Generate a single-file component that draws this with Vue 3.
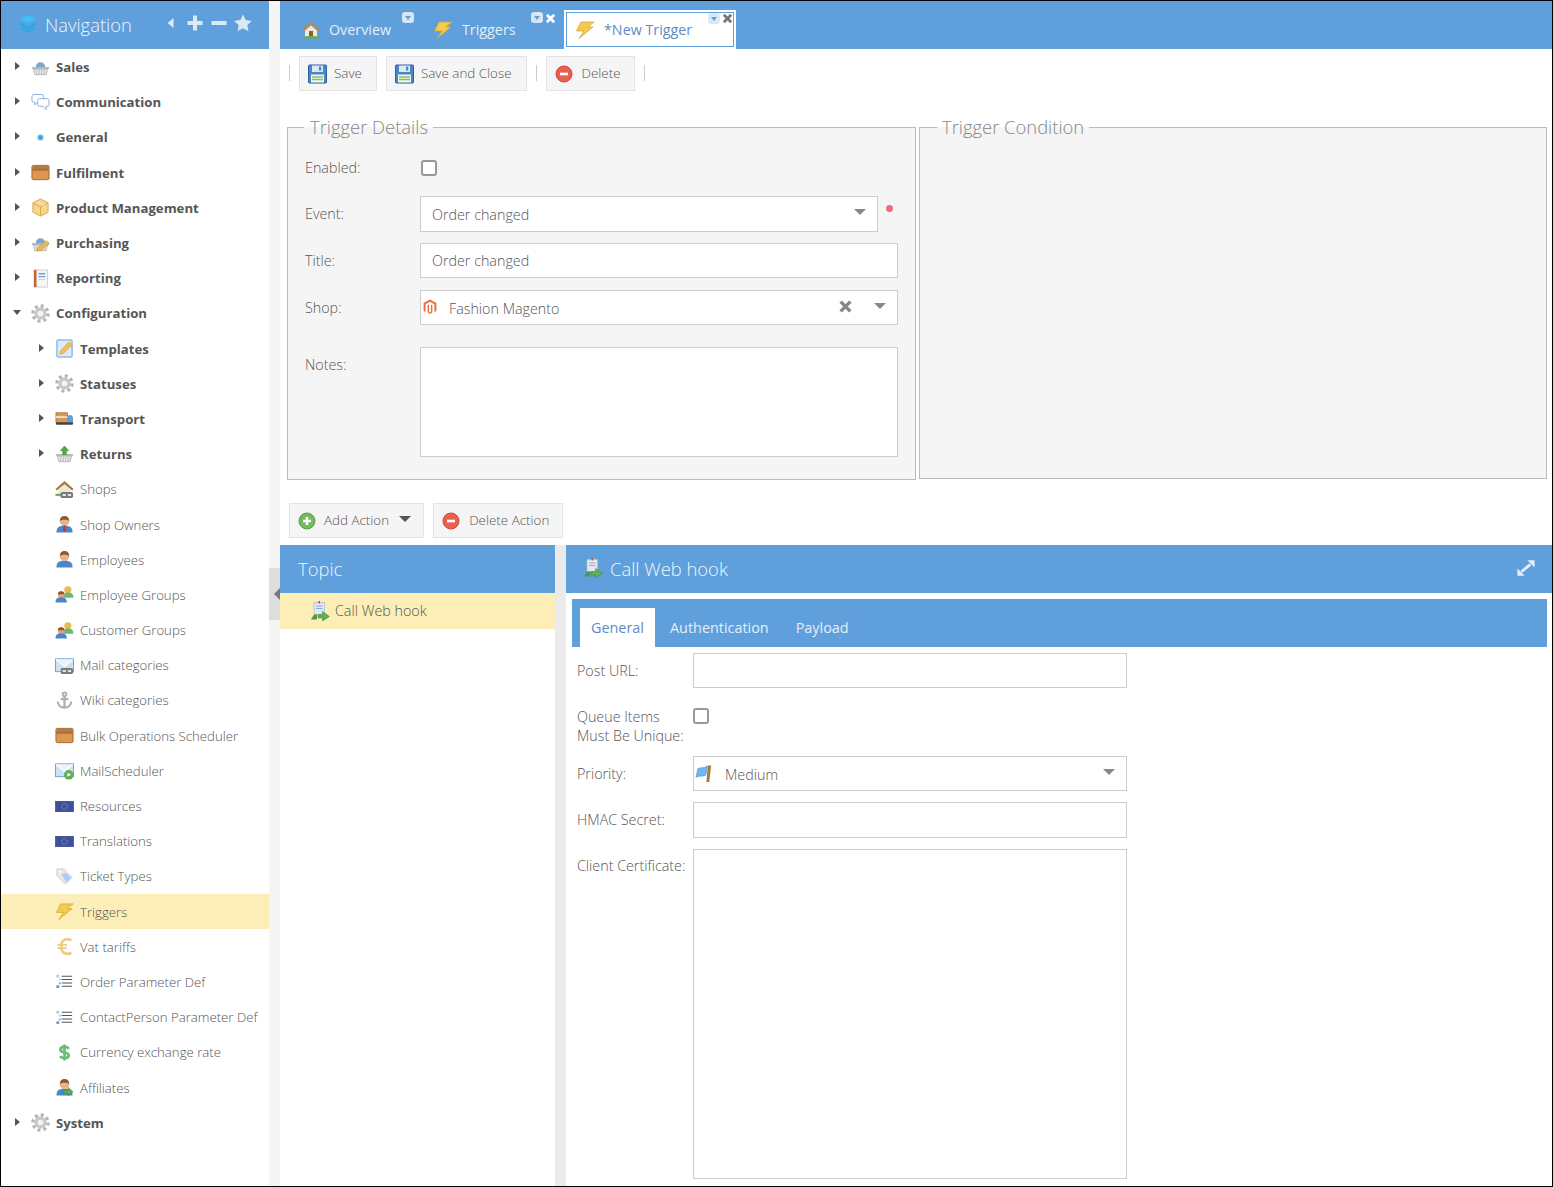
<template>
  <div class="page">
    <aside class="sidebar">
      <div class="nav_head">
        <svg class="ic cube" viewBox="0 0 20 20" v-html="icons.cube"></svg>
        <span class="nav_title">Navigation</span>
        <div class="nav_tools">
          <svg viewBox="0 0 20 20"><path d="M12.500 5v10l-6-5z" fill="#dbe9f7"/></svg>
          <svg viewBox="0 0 20 20"><path d="M8 2.500h4v5.500h5.500v4H12v5.500H8V12H2.500V8H8z" fill="#dbe9f7"/></svg>
          <svg viewBox="0 0 20 20"><path d="M2.500 8h15v4h-15z" fill="#dbe9f7"/></svg>
          <svg viewBox="0 0 20 20"><path d="M10 1.500l2.700 5.600 6.100.8-4.500 4.200 1.200 6.100L10 15.200l-5.500 3 1.200-6.100-4.500-4.200 6.100-.8z" fill="#dbe9f7"/></svg>
        </div>
      </div>
      <ul class="tree">
        <li v-for="item in tree" :key="item.label" class="tree_row"
            :class="{ level1: item.level === 1, active: item.active, bold: item.bold }">
          <span class="caret_slot">
            <i v-if="item.caret === 'right'" class="caret_right"></i>
            <i v-if="item.caret === 'down'" class="caret_down"></i>
          </span>
          <svg class="ic" viewBox="0 0 20 20" v-html="icons[item.icon]"></svg>
          <span class="tree_label">{{ item.label }}</span>
        </li>
      </ul>
    </aside>

    <div class="gutter">
      <div class="collapse_handle"><i></i></div>
    </div>

    <main class="main">
      <div class="tabs">
        <div class="tab tab_overview">
          <svg class="ic" viewBox="0 0 20 20" v-html="icons.home"></svg>
          <span>Overview</span>
          <span class="tab_menu"></span>
        </div>
        <div class="tab tab_triggers">
          <svg class="ic" viewBox="0 0 20 20" v-html="icons.bolt"></svg>
          <span>Triggers</span>
          <span class="tab_menu"></span>
          <svg class="tab_close" viewBox="0 0 12 12"><path d="M2 2l8 8M10 2l-8 8" stroke="currentColor" stroke-width="3"/></svg>
        </div>
        <div class="tab tab_active">
          <svg class="ic" viewBox="0 0 20 20" v-html="icons.bolt"></svg>
          <span>*New Trigger</span>
          <span class="tab_menu"></span>
          <svg class="tab_close" viewBox="0 0 12 12"><path d="M2 2l8 8M10 2l-8 8" stroke="currentColor" stroke-width="3"/></svg>
        </div>
      </div>

      <div class="toolbar">
        <span class="sep"></span>
        <button class="btn">
          <svg class="ic" viewBox="0 0 20 20" v-html="icons.save"></svg><span class="btn_text">Save</span>
        </button>
        <button class="btn">
          <svg class="ic" viewBox="0 0 20 20" v-html="icons.save"></svg><span class="btn_text">Save and Close</span>
        </button>
        <span class="sep"></span>
        <button class="btn btn_del">
          <svg class="ic" viewBox="0 0 20 20" v-html="icons.remove"></svg><span class="btn_text">Delete</span>
        </button>
        <span class="sep"></span>
      </div>

      <div class="fieldsets">
        <fieldset class="group group_left">
          <legend>Trigger Details</legend>
          <div class="row row_enabled">
            <label>Enabled:</label>
            <input type="checkbox" class="check">
          </div>
          <div class="row row_event">
            <label>Event:</label>
            <div class="combo combo_event">
              <span class="combo_text">Order changed</span>
              <i class="combo_caret"></i>
            </div>
            <span class="required"></span>
          </div>
          <div class="row row_title">
            <label>Title:</label>
            <input type="text" class="text_input" value="Order changed">
          </div>
          <div class="row row_shop">
            <label>Shop:</label>
            <div class="combo">
              <svg class="ic ic_magento" viewBox="0 0 20 20" v-html="icons.magento"></svg>
              <span class="combo_text combo_text_low">Fashion Magento</span>
              <svg class="combo_clear" viewBox="0 0 12 12"><path d="M1.500 1.500l9 9M10.500 1.500l-9 9" stroke="#888" stroke-width="3.200"/></svg>
              <i class="combo_caret"></i>
            </div>
          </div>
          <div class="row row_notes">
            <label>Notes:</label>
            <textarea class="text_area notes_area"></textarea>
          </div>
        </fieldset>
        <fieldset class="group group_right">
          <legend>Trigger Condition</legend>
        </fieldset>
      </div>

      <div class="action_bar">
        <button class="btn btn_add">
          <svg class="ic" viewBox="0 0 20 20" v-html="icons.add"></svg><span class="btn_text">Add Action</span><i class="btn_caret"></i>
        </button>
        <button class="btn btn_del">
          <svg class="ic" viewBox="0 0 20 20" v-html="icons.remove"></svg><span class="btn_text">Delete Action</span>
        </button>
      </div>

      <div class="panels">
        <section class="topic_panel">
          <h2 class="panel_head">Topic</h2>
          <div class="topic_row">
            <svg class="ic" viewBox="0 0 20 20" v-html="icons.hook"></svg>
            <span class="topic_text">Call Web hook</span>
          </div>
        </section>
        <section class="detail_panel">
          <h2 class="panel_head detail_head">
            <svg class="ic" viewBox="0 0 20 20" v-html="icons.hook"></svg>
            <span>Call Web hook</span>
            <svg class="expand" viewBox="0 0 20 20">
              <path d="M11.500 1.500H19.500v8z" fill="#e4eff9"/>
              <path d="M0.500 10.500v8h8z" fill="#e4eff9"/>
              <path d="M15 6l-10 8" stroke="#e4eff9" stroke-width="3"/>
            </svg>
          </h2>
          <div class="sub_tabs">
            <span class="sub_tab sub_active">General</span>
            <span class="sub_tab sub_auth">Authentication</span>
            <span class="sub_tab sub_payload">Payload</span>
          </div>
          <div class="detail_form">
            <div class="drow">
              <label>Post URL:</label>
              <input type="text" class="text_input">
            </div>
            <div class="drow drow_queue">
              <label>Queue Items<br>Must Be Unique:</label>
              <input type="checkbox" class="check">
            </div>
            <div class="drow drow_gap">
              <label>Priority:</label>
              <div class="combo">
                <svg class="ic ic_flag" viewBox="0 0 20 20" v-html="icons.flag"></svg>
                <span class="combo_text combo_text_low">Medium</span>
                <i class="combo_caret"></i>
              </div>
            </div>
            <div class="drow drow_gap drow_hmac">
              <label>HMAC Secret:</label>
              <input type="text" class="text_input">
            </div>
            <div class="drow drow_gap drow_cert">
              <label>Client Certificate:</label>
              <textarea class="text_area cert_area"></textarea>
            </div>
          </div>
        </section>
      </div>
    </main>
  </div>
</template>

<script setup>
const basket = '<path d="M1 9.500h18v2H1z" fill="#b9b9b9"/><path d="M2.500 11.500h15l-1.500 6H4z" fill="#e6e6e6" stroke="#a9a9a9" stroke-width=".8"/><path d="M6 12v5M8.700 12v5M11.300 12v5M14 12v5" stroke="#b5b5b5" stroke-width=".8"/>'
const chain = '<rect x="6" y="12.500" width="13" height="6.500" rx="2" fill="#777"/><rect x="8" y="14.700" width="3.500" height="2.200" fill="#e4e4e4"/><rect x="13.500" y="14.700" width="3.500" height="2.200" fill="#e4e4e4"/>'
const person = '<path d="M1.500 18.500c0-5.500 3-7.500 8.500-7.500s8.500 2 8.500 7.500z" fill="#4a86c8"/><circle cx="10" cy="6.500" r="5" fill="#e9b488"/><path d="M5 6.500C5 3 7 1 10 1s5 2 5 5.500C13.500 4.500 6.500 4.500 5 6.500z" fill="#8a5a33"/>'
const people = '<circle cx="13.500" cy="5" r="3.800" fill="#eab95a"/><path d="M8.500 13.500c0-3.500 2-5.500 5.500-5.500s5.500 2 5.500 5.500z" fill="#6fb76a"/><circle cx="6.500" cy="10" r="3.500" fill="#e3a478"/><path d="M3 9.800c0-2.200 1.500-3.300 3.500-3.300s3.500 1.100 3.500 3.300z" fill="#8a5a33"/><path d="M.5 18.500c0-3.500 2-5.500 6-5.500s6 2 6 5.500z" fill="#4a86c8"/>'
const envelope = '<rect x="0.500" y="3" width="19" height="13.500" fill="#cfe2f5" stroke="#6f9fd0"/><path d="M1 3.500L10 11l9-7.500" fill="#e9f2fb" stroke="#fff" stroke-width="1.200"/>'
const flagEu = '<rect x="0.500" y="4.500" width="19" height="11" fill="#3c4fa0" stroke="#2f3b7d" stroke-width=".6"/><circle cx="10" cy="10" r="3" fill="none" stroke="#d8c65a" stroke-width=".9" stroke-dasharray="1 1.350"/>'
const listLines = '<path d="M7 4.500h11M7 8h11M7 11.500h11M7 15h11" stroke="#555" stroke-width="1.100"/><rect x="1.500" y="3" width="2.800" height="2.800" fill="#a8cdf2"/><rect x="4" y="7" width="2" height="2" fill="#a8cdf2"/><rect x="4" y="11" width="2" height="2" fill="#7aa8e0"/><rect x="1.500" y="14" width="2.800" height="2.800" fill="#5f8fdc"/>'
const gear = '<circle cx="10" cy="10" r="8" fill="none" stroke="#b3b3b3" stroke-width="3.400" stroke-dasharray="3.100 3.180"/><circle cx="10" cy="10" r="6.500" fill="#c8c8c8"/><circle cx="10" cy="10" r="3" fill="#f4f4f4"/>'
const crate = '<rect x="1" y="2.500" width="18" height="15" rx="1.500" fill="#e0964f" stroke="#99683a"/><rect x="2" y="3.300" width="16" height="3.500" fill="#b57a43"/><path d="M1.500 7.300h17" stroke="#8f5f33" stroke-width="1.200"/>'

const icons = {
  cube: '<path d="M10 1l8 4-8 4.500L2 5z" fill="#3fc0f5"/><path d="M2 8l8 4.500L18 8v3l-8 4.500L2 11z" fill="#2aa9e8"/><path d="M4 13l6 3.500 6-3.500 2 1.500-8 4.500-8-4.500z" fill="#2aa9e8"/>',
  basket: '<path d="M5 9.500a5 5 0 0 1 10 0z" fill="#7ba7cf"/>' + basket,
  chat: '<path d="M3 1.500h8a2 2 0 0 1 2 2v4a2 2 0 0 1-2 2H7l-3 3v-3H3a2 2 0 0 1-2-2v-4a2 2 0 0 1 2-2z" fill="#fff" stroke="#7fb0e0"/><path d="M9 6h8a2 2 0 0 1 2 2v4a2 2 0 0 1-2 2h-1v3.500L12.500 14H9a2 2 0 0 1-2-2V8a2 2 0 0 1 2-2z" fill="#fff" stroke="#7fb0e0"/>',
  dot: '<circle cx="10" cy="10" r="3.200" fill="#62b8ee"/><circle cx="10" cy="10" r="1.500" fill="#3f9be0"/>',
  crate,
  pack: '<path d="M10 1l8 4v10l-8 4-8-4V5z" fill="#f6d58d" stroke="#dca84a"/><path d="M2.500 5.500L10 9.500l7.500-4M10 9.500V18.500" stroke="#dca84a" fill="none"/><path d="M6 3.500L14 7.500v3" stroke="#fbecc4" fill="none"/>',
  purchase: '<path d="M5 9.500a5 5 0 0 1 10 0z" fill="#7ba7cf"/>' + basket + '<path d="M6 18l1-3 9-8 3 2.500-9 8z" fill="#eeb94f" stroke="#b9862c" stroke-width=".6"/>',
  report: '<rect x="3.500" y="1" width="14" height="18" fill="#f5f5f5" stroke="#cfcfcf"/><rect x="3" y="1" width="2.800" height="18" fill="#c2673a"/><path d="M8 5h7M8 8h7" stroke="#6fa0e0" stroke-width="1.400"/><path d="M8 11h7" stroke="#ccc"/>',
  gear,
  template: '<rect x="2" y="1" width="16" height="18" rx="1" fill="#dcebf9" stroke="#5d9be0"/><path d="M5 16l1-4 9-9 3 3-9 9z" fill="#efc25f" stroke="#c2932f" stroke-width=".6"/>',
  truck: '<rect x="1" y="4" width="12" height="10" fill="#d99a50" stroke="#8c6030" stroke-width=".7"/><path d="M1 7.500h12v2H1z" fill="#f1e3cb"/><path d="M13.500 6.500H18l1 3v5h-5.500z" fill="#5e9fdc"/><rect x="1" y="14" width="18" height="2.500" rx="1" fill="#444"/>',
  returns: basket + '<path d="M10 1l4.500 5H12v4H8V6H5.500z" fill="#55a83f" stroke="#3d8430" stroke-width=".5"/>',
  shop: '<path d="M10 1L.5 9.500 2 11l8-6.500L18 11l1.500-1.500z" fill="#a97941"/><path d="M3.500 10L10 5l6.500 5v8h-13z" fill="#efe7d5"/><rect x=".5" y="14.500" width="7" height="2.200" fill="#69a84f"/>' + chain,
  owner: person + '<path d="M9 11h2l.6 5-1.600 1.500L8.400 16z" fill="#c0392b"/>',
  person,
  people,
  mail_link: envelope + chain,
  anchor: '<circle cx="10" cy="3.500" r="2" fill="none" stroke="#b0b0b0" stroke-width="2"/><path d="M10 5.500v12M6 8.500h8M3 11c0 4 3 6.500 7 6.500s7-2.500 7-6.500" fill="none" stroke="#b0b0b0" stroke-width="2.400"/>',
  mail_play: envelope + '<circle cx="14.500" cy="14.500" r="5" fill="#62ae55"/><path d="M13 12.300l4 2.200-4 2.200z" fill="#fff"/>',
  eu: flagEu,
  tag: '<path d="M2 2h7l9 9-7 7-9-9z" fill="#e8e8e8" stroke="#ccc"/><path d="M7 8l4-2 6 5.500-5 5z" fill="#a9cdf2"/><circle cx="5" cy="5" r="1.300" fill="#fff"/>',
  bolt: '<path d="M6 2h13l-6 5h5L4 18.500l5-7.500H1.500z" fill="#f2cb4f" stroke="#d8a53a" stroke-width=".8"/>',
  euro: '<path d="M17 3.800C15.800 2.600 14.500 2.200 13 2.200 9 2.200 6.500 5.500 6.500 10s2.500 7.800 6.500 7.800c1.500 0 2.800-.4 4-1.600" fill="none" stroke="#eccb85" stroke-width="3"/><path d="M2.500 8.300h10M2.500 11.700h10" stroke="#eccb85" stroke-width="2"/>',
  list: listLines,
  dollar: '<path d="M14.500 6c-1-1.500-2.700-2-4.500-2-2.500 0-4.300 1.200-4.300 3s1.800 2.500 4.300 3 4.500 1.200 4.500 3-2 3-4.500 3c-2 0-3.700-.6-4.700-2M10 1.500v17" fill="none" stroke="#6cbb72" stroke-width="2.800"/>',
  affiliate: person + '<path d="M9 13h5v-3l5 4.500-5 4.500v-3H9z" fill="#5fae52" stroke="#3d8430" stroke-width=".5"/>',
  home: '<path d="M10 2L1 10l1.500 1.500L10 5l7.500 6.500L19 10z" fill="#b98a4d"/><path d="M4 10.500L10 5.500l6 5V17H4z" fill="#f0e9da"/><rect x="8" y="11" width="4" height="6" fill="#8a6236"/><path d="M1 17c3-1.500 15-1.500 18 0l-1 1.500H2z" fill="#6fa84f"/>',
  save: '<rect x=".5" y="1" width="18" height="18" rx="1" fill="#4d86c6" stroke="#2f5f9c"/><rect x="4" y="1.500" width="11" height="6.500" fill="#dce8f5"/><rect x="11" y="2.500" width="2.200" height="4" fill="#4d86c6"/><rect x="3" y="10.500" width="13" height="8" fill="#f2f6ea"/><path d="M4 13h11M4 15.500h11" stroke="#8cbf6a" stroke-width="1.500"/>',
  remove: '<circle cx="9" cy="10" r="8" fill="#e8604f" stroke="#d2483b"/><rect x="5" y="8.700" width="8" height="2.600" fill="#fff"/>',
  add: '<circle cx="9" cy="10" r="8" fill="#76b95f" stroke="#5c9d49"/><path d="M7.700 6h2.600v2.700H13v2.600h-2.700V14H7.700v-2.700H5V8.700h2.700z" fill="#fff"/>',
  hook: '<path d="M4 1.500h10.500v12H4z" fill="#e4e8ec" stroke="#b5bdc5" stroke-width=".8"/><path d="M6 5h6.500M6 7.500h6.500" stroke="#7fb0e0"/><rect x="8.500" y="0" width="1.500" height="2.500" fill="#b55"/><path d="M8 13.500h4.500V10.500l7 5-7 4.500v-3H8z" fill="#62ae55" stroke="#3d8430" stroke-width=".5"/><path d="M1 18.500l3-5h3v5z" fill="#4f9a45"/>',
  magento: '<path d="M10 .5L18 5v10l-2.500 1.400V6.500L10 3.400 4.500 6.500v9.900L2 15V5z" fill="#ee6d3a"/><path d="M7 7.800l1.800-1v9.400l1.200.7 1.200-.7V6.800l1.800 1V17l-3 1.800L7 17z" fill="#ee6d3a"/>',
  flag: '<path d="M3 5c3-2 6 0 10-3l-1.500 9.500c-3 2-7 .5-10.500 2.500z" fill="#6fb8ee" stroke="#3f8fd0" stroke-width=".6"/><path d="M13.500 1.500h3.500L15 19h-3z" fill="#a9783f"/>',
}

const tree = [
  { label: 'Sales', icon: 'basket', bold: true, caret: 'right' },
  { label: 'Communication', icon: 'chat', bold: true, caret: 'right' },
  { label: 'General', icon: 'dot', bold: true, caret: 'right' },
  { label: 'Fulfilment', icon: 'crate', bold: true, caret: 'right' },
  { label: 'Product Management', icon: 'pack', bold: true, caret: 'right' },
  { label: 'Purchasing', icon: 'purchase', bold: true, caret: 'right' },
  { label: 'Reporting', icon: 'report', bold: true, caret: 'right' },
  { label: 'Configuration', icon: 'gear', bold: true, caret: 'down' },
  { label: 'Templates', icon: 'template', bold: true, caret: 'right', level: 1 },
  { label: 'Statuses', icon: 'gear', bold: true, caret: 'right', level: 1 },
  { label: 'Transport', icon: 'truck', bold: true, caret: 'right', level: 1 },
  { label: 'Returns', icon: 'returns', bold: true, caret: 'right', level: 1 },
  { label: 'Shops', icon: 'shop', level: 1 },
  { label: 'Shop Owners', icon: 'owner', level: 1 },
  { label: 'Employees', icon: 'person', level: 1 },
  { label: 'Employee Groups', icon: 'people', level: 1 },
  { label: 'Customer Groups', icon: 'people', level: 1 },
  { label: 'Mail categories', icon: 'mail_link', level: 1 },
  { label: 'Wiki categories', icon: 'anchor', level: 1 },
  { label: 'Bulk Operations Scheduler', icon: 'crate', level: 1 },
  { label: 'MailScheduler', icon: 'mail_play', level: 1 },
  { label: 'Resources', icon: 'eu', level: 1 },
  { label: 'Translations', icon: 'eu', level: 1 },
  { label: 'Ticket Types', icon: 'tag', level: 1 },
  { label: 'Triggers', icon: 'bolt', level: 1, active: true },
  { label: 'Vat tariffs', icon: 'euro', level: 1 },
  { label: 'Order Parameter Def', icon: 'list', level: 1 },
  { label: 'ContactPerson Parameter Def', icon: 'list', level: 1 },
  { label: 'Currency exchange rate', icon: 'dollar', level: 1 },
  { label: 'Affiliates', icon: 'affiliate', level: 1 },
  { label: 'System', icon: 'gear', bold: true, caret: 'right' },
]
</script>

<style>
html, body {
  margin: 0;
  overflow: hidden;
}
</style>

<style scoped>
.page {
  box-sizing: border-box;
  width: 1553px;
  height: 1187px;
  border: 1px solid #000;
  display: flex;
  background: #fff;
  font-family: "Open Sans", sans-serif;
  font-size: 14.3px;
  color: #555;
  overflow: hidden;
}

.ic {
  width: 20px;
  height: 20px;
  flex: none;
}

/* navigation */
.sidebar {
  width: 268px;
  flex: none;
  background: #fff;
}

.nav_head {
  box-sizing: border-box;
  height: 48px;
  background: #5e9fdc;
  display: flex;
  align-items: center;
  padding: 0 0 2px 17px;
  color: #f0f6fc;
  font-size: 18.4px;
  font-weight: 300;
}

.nav_title {
  margin-left: 7px;
}

.nav_tools {
  display: flex;
  margin-left: 29px;
  margin-top: -2px;
  gap: 4px;
}

.nav_tools svg {
  width: 20px;
  height: 20px;
}

.tree {
  list-style: none;
  margin: 0;
  padding: 0.5px 0 0;
}

.tree_row {
  height: 35.2px;
  display: flex;
  align-items: center;
  padding-left: 10px;
  font-size: 13.2px;
  font-weight: 300;
}

.tree_row .ic {
  width: 19px;
  height: 19px;
}

.tree_row.bold {
  font-weight: 700;
}

.tree_row.level1 {
  padding-left: 34px;
}

.tree_row.active {
  background: #fdeeb8;
}

.caret_slot {
  width: 12px;
  margin-right: 8px;
  height: 12px;
  display: flex;
  align-items: center;
  justify-content: center;
  margin-top: -2px;
}

.caret_right {
  border-left: 5px solid #555;
  border-top: 4.5px solid transparent;
  border-bottom: 4.5px solid transparent;
}

.caret_down {
  border-top: 5px solid #555;
  border-left: 4.5px solid transparent;
  border-right: 4.5px solid transparent;
}

.tree_label {
  margin-left: 6px;
  white-space: nowrap;
}

.gutter {
  width: 11px;
  flex: none;
  background: #f5f5f5;
  position: relative;
}

.collapse_handle {
  position: absolute;
  left: 0;
  top: 567px;
  width: 11px;
  height: 52px;
  background: #ddd;
  display: flex;
  align-items: center;
  justify-content: flex-end;
}

.collapse_handle i {
  border-right: 6px solid #777;
  border-top: 6px solid transparent;
  border-bottom: 6px solid transparent;
}

/* tabs */
.main {
  flex: 1;
  min-width: 0;
  display: flex;
  flex-direction: column;
}

.tabs {
  height: 48px;
  flex: none;
  background: #5e9fdc;
  display: flex;
  color: #e4eff9;
  font-size: 14.3px;
}

.tab {
  position: relative;
  box-sizing: border-box;
  height: 48px;
  display: flex;
  align-items: center;
  padding-top: 9px;
}

.tab_overview {
  width: 145px;
  padding-left: 21px;
  gap: 8px;
}

.tab_triggers {
  width: 139px;
  padding-left: 8px;
  gap: 9px;
}

.tab_active {
  width: 172px;
  height: 39px;
  margin-top: 9px;
  padding: 0 0 0 9px;
  gap: 9px;
  background: #fff;
  border: 2px solid #fff;
  box-shadow: inset 0 0 0 1px #5e9fdc;
  color: #5e8cc4;
}

.tab_menu {
  position: absolute;
  top: 11px;
  width: 12px;
  height: 11px;
  border-radius: 3px;
  background: #d6e6f6;
}

.tab_menu::after {
  content: "";
  position: absolute;
  left: 3px;
  top: 4px;
  border-top: 4px solid #5e9fdc;
  border-left: 3px solid transparent;
  border-right: 3px solid transparent;
}

.tab_overview .tab_menu {
  left: 122px;
}

.tab_triggers .tab_menu {
  left: 106px;
}

.tab_close {
  position: absolute;
  top: 12px;
  left: 120px;
  width: 11px;
  height: 11px;
  color: #fff;
}

.tab_active .tab_menu {
  top: 1px;
  left: 142px;
  background: #dce8f4;
}

.tab_active .tab_close {
  top: 1px;
  left: 156px;
  color: #777;
}

/* toolbars */
.toolbar {
  height: 66px;
  flex: none;
  display: flex;
  align-items: flex-start;
  padding: 7px 0 0 9px;
  box-sizing: border-box;
}

.sep {
  width: 1px;
  height: 16px;
  margin: 9px 9px 0 0;
  background: #ccc;
}

.btn {
  height: 35px;
  box-sizing: border-box;
  display: flex;
  align-items: center;
  padding: 0 14px 0 8px;
  margin-right: 9px;
  background: #f5f5f5;
  border: 1px solid #e3e3e3;
  font-family: inherit;
  font-size: 13.4px;
  font-weight: 300;
  color: #555;
}

.btn .ic {
  margin-right: 6px;
}

.btn_text {
  margin-top: -2px;
}

.btn_del {
  padding-right: 13px;
}

.btn_del .ic {
  margin-right: 7px;
}

.btn_add {
  padding-right: 12px;
}

.btn_caret {
  margin-left: 10px;
  border-top: 6px solid #555;
  border-left: 6px solid transparent;
  border-right: 6px solid transparent;
  margin-top: -3px;
}

/* field groups */
.fieldsets {
  display: grid;
  grid-template-columns: 629px 1fr;
  column-gap: 3px;
  padding: 0 5px 0 7px;
  flex: none;
}

.group {
  margin: 0;
  min-width: 0;
  box-sizing: border-box;
  background: #f5f5f5;
  border: 1px solid #bbb;
  padding: 11px 17px 0 16px;
  height: 365px;
}

.group_right {
  height: 364px;
  padding-left: 17px;
}

.group legend {
  font-size: 18.4px;
  font-weight: 300;
  line-height: 24px;
  padding: 0 5px 0 6px;
  color: #888;
}

.group_right legend {
  padding-left: 5px;
}

.row {
  display: flex;
  align-items: center;
  min-height: 35px;
  margin-bottom: 11px;
}

.row label {
  box-sizing: border-box;
  width: 116px;
  flex: none;
  padding-left: 1px;
  font-weight: 300;
}

.row_enabled .check {
  margin: 0 0 0 1px;
}

.row_event label {
  margin-top: -2px;
}

.row_title {
  margin-bottom: 12px;
}

.row_shop {
  margin-bottom: 22px;
}

.row_notes {
  align-items: flex-start;
}

.row_notes label {
  padding-top: 8px;
}

.check {
  appearance: none;
  box-sizing: border-box;
  width: 16px;
  height: 16px;
  margin: 0;
  background: #fff;
  border: 2px solid #999;
  border-radius: 3px;
}

.text_input,
.text_area {
  box-sizing: border-box;
  width: 478px;
  height: 35px;
  margin: 0;
  padding: 0 11px;
  background: #fff;
  border: 1px solid #ccc;
  font-family: inherit;
  font-size: 14.3px;
  font-weight: 300;
  color: #555;
  outline: none;
  border-radius: 0;
  resize: none;
}

.notes_area {
  height: 110px;
}

.combo {
  box-sizing: border-box;
  width: 478px;
  height: 35px;
  display: flex;
  align-items: center;
  background: #fff;
  border: 1px solid #ccc;
  font-weight: 300;
}

.combo_event {
  width: 458px;
  height: 36px;
}

.combo_text {
  flex: 1;
  padding-left: 11px;
}

.combo_text_low {
  margin-top: 2px;
}

.ic_magento {
  width: 16px;
  height: 16px;
  margin: -2px 0 0 1px;
}

.combo_clear {
  width: 13px;
  height: 13px;
  margin-right: 22px;
  margin-top: -3px;
}

.combo_caret {
  margin-right: 11px;
  margin-top: -4px;
  border-top: 6px solid #888;
  border-left: 6px solid transparent;
  border-right: 6px solid transparent;
}

.required {
  width: 7px;
  height: 7px;
  margin: -11px 0 0 8px;
  border-radius: 50%;
  background: #e8707a;
}

.action_bar {
  flex: none;
  display: flex;
  padding: 23px 0 0 9px;
}

/* lower panels */
.panels {
  flex: 1;
  min-height: 0;
  margin-top: 7px;
  display: flex;
  background: #ebebeb;
  gap: 11px;
}

.topic_panel {
  width: 275px;
  flex: none;
  background: #fff;
}

.panel_head {
  box-sizing: border-box;
  height: 48px;
  margin: 0;
  background: #5e9fdc;
  display: flex;
  align-items: center;
  padding: 0 0 2px 18px;
  color: #f0f6fc;
  font-size: 18.4px;
  font-weight: 300;
}

.topic_row {
  height: 36px;
  background: #fdeeb8;
  display: flex;
  align-items: center;
  padding-left: 30px;
  gap: 5px;
  font-weight: 300;
}

.topic_text {
  margin-top: -2px;
}

.detail_panel {
  flex: 1;
  min-width: 0;
  background: #fff;
}

.detail_head {
  padding-left: 17px;
  gap: 7px;
}

.expand {
  width: 18px;
  height: 18px;
  margin-left: auto;
  margin-right: 17px;
}

.sub_tabs {
  height: 48px;
  margin: 6px 5px 0 6px;
  background: #5e9fdc;
  display: flex;
  align-items: flex-end;
  padding-left: 8px;
  color: #e4eff9;
  font-size: 14.4px;
}

.sub_tab {
  height: 39px;
  line-height: 40px;
  box-sizing: border-box;
}

.sub_active {
  width: 75px;
  padding-left: 11px;
  background: #fff;
  color: #5e8cc4;
}

.sub_auth {
  margin-left: 15px;
}

.sub_payload {
  margin-left: 27px;
}

.detail_form {
  padding: 6px 0 0 11px;
}

.drow {
  display: flex;
  align-items: center;
  min-height: 35px;
}

.drow label {
  width: 116px;
  flex: none;
  line-height: 19px;
  white-space: nowrap;
  font-weight: 300;
}

.drow .text_input,
.drow .combo,
.drow .text_area {
  width: 434px;
}

.drow_queue {
  align-items: flex-start;
  min-height: 38px;
  margin-top: 19px;
}

.drow_queue .check {
  margin-top: 1px;
}

.drow_gap {
  margin-top: 11px;
}

.drow_hmac .text_input {
  height: 36px;
}

.drow_hmac label {
  margin-top: -2px;
}

.drow_cert {
  align-items: flex-start;
}

.drow_cert label {
  padding-top: 7px;
}

.cert_area {
  height: 330px;
}

.ic_flag {
  margin: -1px 0 0 1px;
  width: 19px;
  height: 19px;
}
</style>
